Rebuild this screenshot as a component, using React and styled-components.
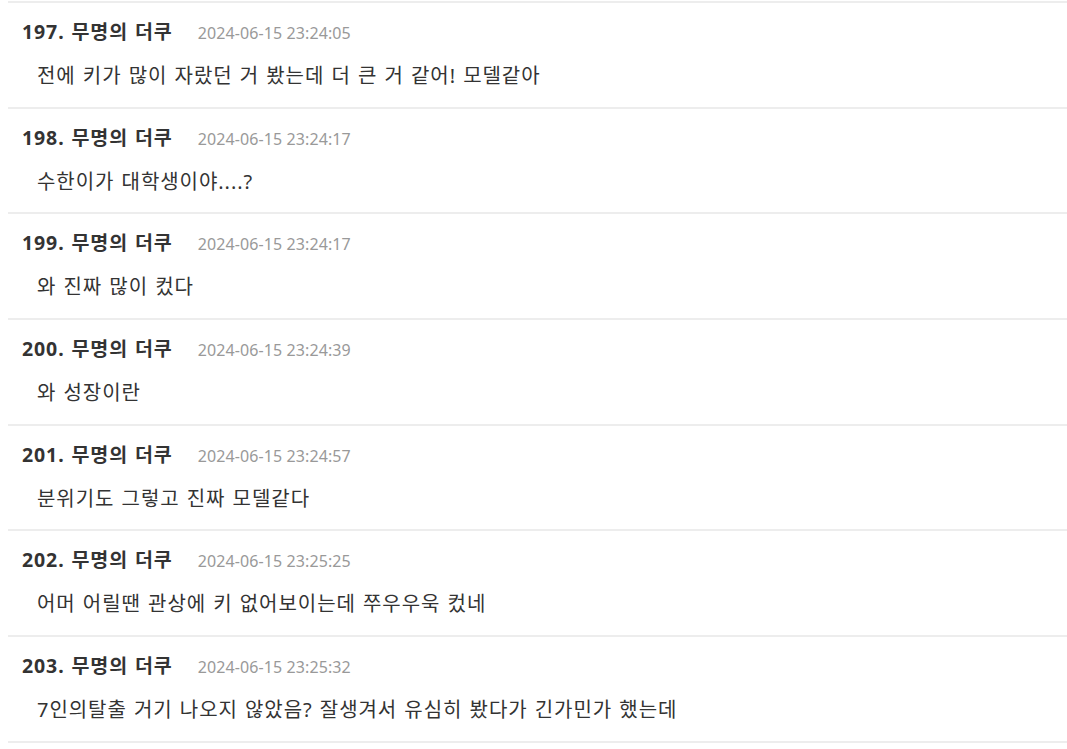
import React from 'react';
import styled, { createGlobalStyle } from 'styled-components';

const GlobalStyle = createGlobalStyle`
  body {
    margin: 0 0 0 8px;
    background: #fff;
    font-family: "Noto Sans", "Noto Sans CJK KR", sans-serif;
  }
`;

const CommentList = styled.ul`
  list-style: none;
  margin: 0;
  padding: 0;
  padding-top: 1px;
`;

const TopEdge = styled.li`
  height: 0;
  border-bottom: 2px solid #ededed;
`;

const CommentItem = styled.li`
  padding: 14px 0 15.7px 14px;
  border-bottom: 2px solid #ededed;
`;

const CommentHeader = styled.div`
  display: flex;
  align-items: baseline;
  gap: 25px;
  height: 30px;
  line-height: 30px;
`;

const Author = styled.span`
  font-size: 19.5px;
  font-weight: 700;
  letter-spacing: 0.9px;
  word-spacing: 1px;
  color: #333;
`;

const Date = styled.span`
  font-size: 16px;
  letter-spacing: 0.1px;
  color: #999;
`;

const CommentBody = styled.p`
  margin: 14px 0 0;
  padding-left: 15px;
  font-size: 20px;
  letter-spacing: 0.95px;
  word-spacing: 1px;
  line-height: 30px;
  color: #333;
`;

const comments = [
  { no: 197, date: '2024-06-15 23:24:05', text: '전에 키가 많이 자랐던 거 봤는데 더 큰 거 같어! 모델같아' },
  { no: 198, date: '2024-06-15 23:24:17', text: '수한이가 대학생이야....?' },
  { no: 199, date: '2024-06-15 23:24:17', text: '와 진짜 많이 컸다' },
  { no: 200, date: '2024-06-15 23:24:39', text: '와 성장이란' },
  { no: 201, date: '2024-06-15 23:24:57', text: '분위기도 그렇고 진짜 모델같다' },
  { no: 202, date: '2024-06-15 23:25:25', text: '어머 어릴땐 관상에 키 없어보이는데 쭈우우욱 컸네' },
  { no: 203, date: '2024-06-15 23:25:32', text: '7인의탈출 거기 나오지 않았음? 잘생겨서 유심히 봤다가 긴가민가 했는데' },
];

export default function App() {
  return (
    <>
      <GlobalStyle />
      <CommentList>
        <TopEdge />
        {comments.map((c) => (
          <CommentItem key={c.no}>
            <CommentHeader>
              <Author>{c.no}. 무명의 더쿠</Author>
              <Date>{c.date}</Date>
            </CommentHeader>
            <CommentBody>{c.text}</CommentBody>
          </CommentItem>
        ))}
      </CommentList>
    </>
  );
}
